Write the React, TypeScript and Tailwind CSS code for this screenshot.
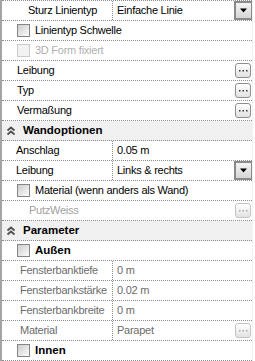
import React from 'react';

const font = { fontFamily: '"Liberation Sans", Arial, sans-serif' };

const Dots = ({ disabled }: { disabled?: boolean }) => (
  <svg width="9" height="2" viewBox="0 0 9 2">
    <rect x="0" y="0" width="1.5" height="1.5" fill={disabled ? '#a8a8a8' : '#303030'} />
    <rect x="3.5" y="0" width="1.5" height="1.5" fill={disabled ? '#a8a8a8' : '#303030'} />
    <rect x="7" y="0" width="1.5" height="1.5" fill={disabled ? '#a8a8a8' : '#303030'} />
  </svg>
);

const EllipsisButton = ({ disabled }: { disabled?: boolean }) => (
  <div
    className={
      'ml-auto mr-[1px] w-[16px] h-[15px] rounded-[3px] border flex items-center justify-center bg-gradient-to-b from-white to-[#e2e2e2] ' +
      (disabled ? 'border-[#c4c4c4]' : 'border-[#8e8e8e]')
    }
  >
    <Dots disabled={disabled} />
  </div>
);

const DropButton = () => (
  <div className="ml-auto mr-[-1px] w-[19px] h-[19px] border-2 border-[#8a8a8a] bg-gradient-to-b from-[#f4f4f4] to-[#d6d6d6] flex items-center justify-center">
    <svg width="7" height="5" viewBox="0 0 7 5">
      <path d="M0 0.5 H7 L3.5 4.5 Z" fill="#000" />
    </svg>
  </div>
);

const Checkbox = ({ disabled }: { disabled?: boolean }) => (
  <div
    className={
      'w-[13px] h-[13px] border shrink-0 ' +
      (disabled
        ? 'border-[#cacaca] bg-[#f2f2f2]'
        : 'border-[#858585] bg-gradient-to-br from-[#cdcdcd] to-[#fbfbfb]')
    }
  />
);

// double chevron of the collapsible section header
const Chevrons = () => (
  <svg width="10" height="10" viewBox="0 0 10 10">
    <path d="M1.5 4.5 L5 1.5 L8.5 4.5" fill="none" stroke="#505050" strokeWidth="1.8" />
    <path d="M1.5 8.5 L5 5.5 L8.5 8.5" fill="none" stroke="#505050" strokeWidth="1.8" />
  </svg>
);

interface PropRowProps {
  label: string;
  value?: string;
  muted?: boolean;
  button?: 'drop' | 'dots' | 'dotsOff';
  indent?: string;
}

const PropRow: React.FC<PropRowProps> = ({ label, value, muted, button, indent = 'pl-[15px]' }) => {
  const color = muted ? 'text-[#6c6c6c]' : 'text-black';
  return (
    <div className="flex h-[20px] border-b border-dotted border-[#8c8c8c]">
      <div className={'w-[111px] shrink-0 flex items-center border-r border-dotted border-[#8c8c8c] ' + indent + ' ' + color}>
        {label}
      </div>
      <div className={'flex-1 flex items-center pl-[4px] ' + color}>
        <span>{value}</span>
        {button === 'drop' && <DropButton />}
        {button === 'dots' && <EllipsisButton />}
        {button === 'dotsOff' && <EllipsisButton disabled />}
      </div>
    </div>
  );
};

const PlainRow = ({ label, muted, button, indent = 'pl-[15px]' }: { label: string; muted?: boolean; button?: boolean; indent?: string }) => (
  <div className={'flex items-center h-[20px] border-b border-dotted border-[#8c8c8c] ' + indent + (muted ? ' text-[#a0a0a0]' : ' text-black')}>
    <span>{label}</span>
    {button && <EllipsisButton disabled={muted} />}
  </div>
);

const CheckRow = ({ label, disabled, bold }: { label: string; disabled?: boolean; bold?: boolean }) => (
  <div className="flex items-center h-[20px] border-b border-dotted border-[#8c8c8c] pl-[15px] gap-[5px]">
    <Checkbox disabled={disabled} />
    <span className={(disabled ? 'text-[#b0b0b0]' : 'text-black') + (bold ? ' font-bold text-[11.5px] tracking-normal' : '')}>
      {label}
    </span>
  </div>
);

const SectionRow = ({ label }: { label: string }) => (
  <div className="flex items-center h-[20px] border-b border-dotted border-[#8c8c8c] bg-[#f0f0f0] pl-[4px] gap-[7px]">
    <Chevrons />
    <span className="font-bold text-[11.5px] tracking-normal text-black">{label}</span>
  </div>
);

export default function App() {
  return (
    <div className="w-[255px] h-[361px] overflow-hidden bg-white flex" style={font}>
      <div className="w-[2px] bg-[#a4a4a4] shrink-0" />
      <div className="w-[250px] text-[11px] tracking-[-0.25px] border-t border-dotted border-[#8c8c8c]">
        <PropRow label="Sturz Linientyp" value="Einfache Linie" button="drop" indent="pl-[26px]" />
        <CheckRow label="Linientyp Schwelle" />
        <CheckRow label="3D Form fixiert" disabled />
        <PlainRow label="Leibung" button />
        <PlainRow label="Typ" button />
        <PlainRow label="Vermaßung" button />
        <SectionRow label="Wandoptionen" />
        <PropRow label="Anschlag" value="0.05 m" indent="pl-[14px]" />
        <PropRow label="Leibung" value="Links & rechts" button="drop" indent="pl-[14px]" />
        <CheckRow label="Material (wenn anders als Wand)" />
        <PlainRow label="PutzWeiss" muted button indent="pl-[27px]" />
        <SectionRow label="Parameter" />
        <CheckRow label="Außen" bold />
        <PropRow label="Fensterbanktiefe" value="0 m" muted indent="pl-[18px]" />
        <PropRow label="Fensterbankstärke" value="0.02 m" muted indent="pl-[18px]" />
        <PropRow label="Fensterbankbreite" value="0 m" muted indent="pl-[18px]" />
        <PropRow label="Material" value="Parapet" muted button="dotsOff" indent="pl-[18px]" />
        <CheckRow label="Innen" bold />
      </div>
      <div className="flex-1 border-l border-[#f2f2f2]" />
    </div>
  );
}
